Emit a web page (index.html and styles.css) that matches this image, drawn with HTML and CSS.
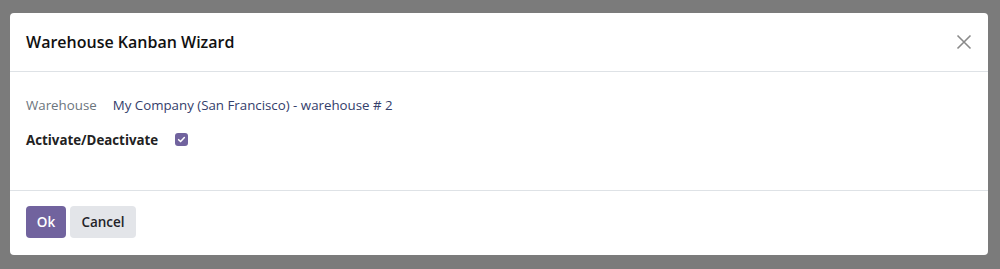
FILE: index.html
```html
<!DOCTYPE html>
<html>
<head>
<meta charset="utf-8">
<link rel="stylesheet" href="styles.css">
</head>
<body>
<div class="modal">
  <div class="modal-header">
    <h4 class="modal-title">Warehouse Kanban Wizard</h4>
    <button class="close" aria-label="Close">
      <svg width="16" height="16" viewBox="0 0 16 16"><path d="M1.5 1.5 L14.5 14.5 M14.5 1.5 L1.5 14.5" stroke="#8a8a8a" stroke-width="1.6" fill="none"/></svg>
    </button>
  </div>
  <div class="modal-body">
    <div class="field-row">
      <span class="label">Warehouse</span>
      <span class="value">My Company (San Francisco) - warehouse # 2</span>
    </div>
    <div class="field-row">
      <span class="label bold">Activate/Deactivate</span>
      <span class="checkbox">
        <svg width="9" height="9" viewBox="0 0 10 10"><path d="M1.8 5.2 L4 7.3 L8.2 2.8" stroke="#fff" stroke-width="1.7" fill="none" stroke-linecap="round" stroke-linejoin="round"/></svg>
      </span>
    </div>
  </div>
  <div class="modal-footer">
    <button class="btn btn-primary">Ok</button>
    <button class="btn btn-secondary">Cancel</button>
  </div>
</div>
</body>
</html>
```
FILE: styles.css
```css
* { box-sizing: border-box; }
html, body { margin: 0; height: 100%; }
body {
  background: #7b7b7b;
  padding: 13px 0 0 10px;
  font-family: "Open Sans", "Noto Sans", sans-serif;
  font-size: 13.3px;
}
.modal {
  width: 978px;
  height: 242px;
  background: #fff;
  border-radius: 4px;
  display: flex;
  flex-direction: column;
}
.modal-header {
  height: 59px;
  border-bottom: 1px solid #dee2e6;
  display: flex;
  align-items: center;
  justify-content: space-between;
  padding: 0 16px 0 16px;
}
.modal-title {
  margin: 0;
  font-size: 16px;
  font-weight: 600;
  color: #111;
}
.close {
  background: none;
  border: 0;
  padding: 0;
  width: 16px;
  height: 16px;
  display: flex;
}
.modal-body {
  height: 119px;
  border-bottom: 1px solid #dee2e6;
  padding: 22px 16px 0 16px;
  display: flex;
  flex-direction: column;
  gap: 14px;
}
.field-row {
  display: flex;
  align-items: center;
  gap: 16px;
  height: 21px;
}
.label { color: #6c757d; }
.label.bold { color: #222; font-weight: 700; }
.value { color: #34406b; }
.checkbox {
  width: 13px;
  height: 13px;
  border-radius: 3px;
  background: #71639e;
  display: flex;
  align-items: center;
  justify-content: center;
  margin-left: 1px;
}
.modal-footer {
  flex: 1;
  padding: 15px 16px;
  display: flex;
  align-items: flex-start;
  gap: 4px;
}
.btn {
  height: 32px;
  border: 0;
  border-radius: 4px;
  font-family: inherit;
  font-size: 13.5px;
  font-weight: 600;
  padding: 0;
}
.btn-primary { background: #71639e; color: #fff; width: 40px; }
.btn-secondary { background: #e3e5e9; color: #1f2328; width: 66px; }
```
